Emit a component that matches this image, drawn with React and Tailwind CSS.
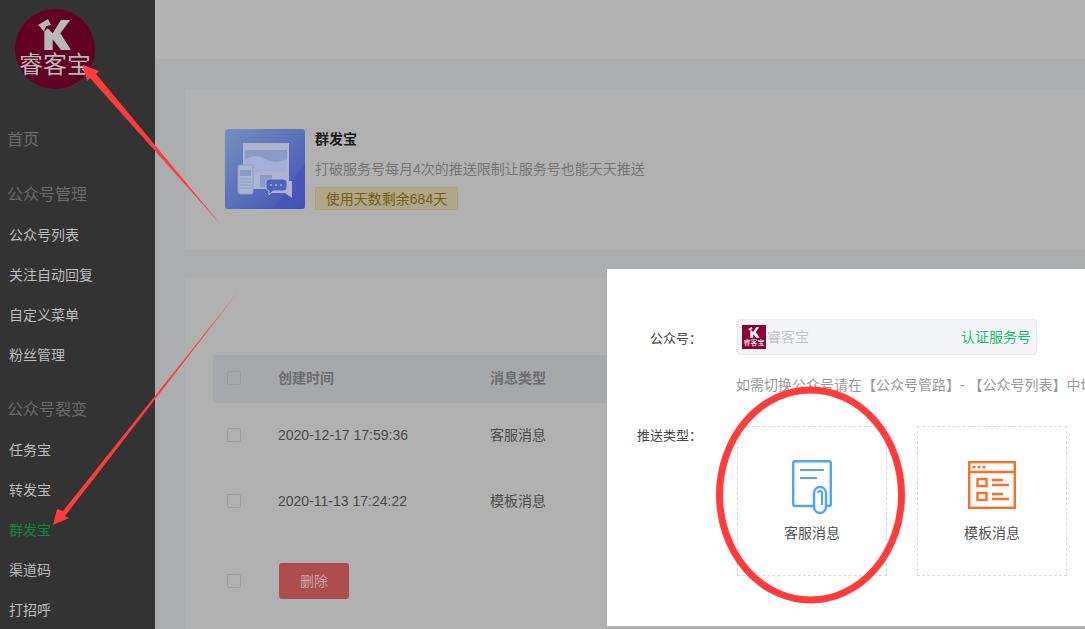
const FONT = 'font-["Liberation_Sans","Noto_Sans_CJK_SC",sans-serif]';

function NavGroup({ title, items }) {
  return (
    <div className="mb-[15px]">
      <div className="h-[40px] pl-[7px] text-base leading-[40px] text-[#6b6b6b]">{title}</div>
      {items.map((item) => (
        <div
          key={item}
          className={`h-[40px] pl-[9px] text-sm leading-[40px] ${item === '群发宝' ? 'text-[#0b8a3c]' : 'text-[#bcbcbc]'}`}
        >
          {item}
        </div>
      ))}
    </div>
  );
}

function KMark({ className }) {
  return (
    <svg viewBox="0 0 34 32" className={className}>
      <path d="M0 6 L10 0 L13 6 L8 7 L6 12.700 L2 7.700 Z" fill="currentColor" />
      <path d="M6.300 12.700 L9.700 9.300 L14.700 14.300 L23 1 L32.300 1 L22.300 14.300 L33 31 L23 31 L14.700 20.300 L14.700 31 L6.300 31 Z" fill="currentColor" />
    </svg>
  );
}

function Sidebar() {
  return (
    <aside className="w-[155px] shrink-0 bg-[#333333]">
      <div className="ml-[15px] mt-[9px] flex h-[80px] w-[80px] flex-col items-center overflow-hidden rounded-full bg-[#610023] text-[#b8b8b8]">
        <KMark className="mt-[10px] h-[32px] w-[34px] shrink-0" />
        <span className="whitespace-nowrap text-[24px] leading-[28px]">睿客宝</span>
      </div>
      <div className="mt-[36px] h-[30px] pl-[7px] text-base leading-[30px] text-[#6b6b6b]">首页</div>
      <div className="mt-[20px]">
        <NavGroup title="公众号管理" items={['公众号列表', '关注自动回复', '自定义菜单', '粉丝管理']} />
        <NavGroup title="公众号裂变" items={['任务宝', '转发宝', '群发宝', '渠道码', '打招呼']} />
      </div>
    </aside>
  );
}

function Illustration() {
  return (
    <svg viewBox="0 0 80 80" className="h-[80px] w-[80px] shrink-0 rounded-[3px]">
      <defs>
        <linearGradient id="ill" x1="0" y1="0" x2="1" y2="1">
          <stop offset="0" stopColor="#7391bf" />
          <stop offset="1" stopColor="#4250b5" />
        </linearGradient>
      </defs>
      <rect width="80" height="80" fill="url(#ill)" />
      <path d="M80 34 L48 80 L80 80 Z" fill="#4654b8" opacity=".6" />
      <rect x="18" y="14" width="46" height="46" fill="#adb4cd" />
      <rect x="20" y="21" width="42" height="22" fill="#8a9bc9" />
      <path d="M20 30 Q30 24 40 30 T62 30 V43 H20 Z" fill="#a3afd4" />
      <rect x="35" y="46" width="12" height="12" fill="#8a9bc9" />
      <rect x="13" y="36" width="15" height="29" rx="2" fill="#adb4cd" stroke="#8b9ccb" />
      <rect x="15" y="41" width="11" height="6" fill="#8a9bc9" />
      <path d="M15 50 H26 M15 53 H26 M15 56 H26 M15 59 H26" stroke="#8b9ccb" />
      <path d="M62 52 H67 V69 L60 64 H47 V60 H62 Z" fill="#adb4cd" />
      <path d="M44 50 H58 Q62 50 62 53 V59 Q62 62 58 62 H48 L44 66 V62 Q41 61 41 59 V53 Q41 50 44 50 Z" fill="#4f63bd" stroke="#adb4cd" />
      <circle cx="46" cy="56" r="1" fill="#adb4cd" />
      <circle cx="51" cy="56" r="1" fill="#adb4cd" />
      <circle cx="56" cy="56" r="1" fill="#adb4cd" />
    </svg>
  );
}

function Check() {
  return <span className="h-[14px] w-[14px] shrink-0 rounded-[2px] border border-[#9b9ca0]" />;
}

function Row({ time, type }) {
  return (
    <div className="flex h-[66px] items-center pb-[2px] pl-[14px] text-sm text-[#4a4a4c]">
      <Check />
      <span className="ml-[37px] w-[212px]">{time}</span>
      <span>{type}</span>
    </div>
  );
}

function Main() {
  return (
    <main className="min-w-0 flex-1 bg-[#acadaf]">
      <div className="h-[59px] bg-[#b3b3b3]" />
      <div className="pl-[30px] pt-[30px]">
        <section className="flex h-[160px] items-start bg-[#b1b1b1] pl-[40px] pt-[40px]">
          <Illustration />
          <div className="ml-[10px]">
            <div className="mt-[1px] text-sm font-bold leading-[18px] text-[#1c1c1c]">群发宝</div>
            <div className="mt-[11px] text-sm leading-[20px] text-[#757575]">打破服务号每月4次的推送限制让服务号也能天天推送</div>
            <div className="mt-[8px] flex h-[23px] w-[143px] items-center justify-center border border-[#a9a27e] bg-[#aea88a] text-sm text-[#7a5a10]">使用天数剩余684天</div>
          </div>
        </section>
        <section className="mt-[28px] h-[352px] bg-[#b1b1b1] pl-[28px] pt-[78px]">
          <div className="flex h-[48px] items-center bg-[#a7a8ac] pb-[2px] pl-[14px] text-sm font-bold text-[#6d6d70]">
            <Check />
            <span className="ml-[37px] w-[212px]">创建时间</span>
            <span>消息类型</span>
          </div>
          <Row time="2020-12-17 17:59:36" type="客服消息" />
          <Row time="2020-11-13 17:24:22" type="模板消息" />
          <div className="mt-[28px] flex items-center pl-[14px]">
            <Check />
            <button type="button" className="ml-[38px] h-[36px] w-[70px] rounded-[3px] bg-[#ad4d4f] text-sm text-[#c9a6a6]">删除</button>
          </div>
        </section>
      </div>
    </main>
  );
}

function ServiceIcon() {
  return (
    <svg viewBox="0 0 40 54" className="h-[54px] w-[40px] self-start" fill="none" stroke="#4da3ff" strokeWidth="2.400">
      <path d="M22 46 H3 Q1.200 46 1.200 44 V3 Q1.200 1.200 3 1.200 H37 Q38.800 1.200 38.800 3 V44 Q38.800 46 37 46 H34" />
      <path d="M8 10 H32 M8 18 H25" strokeWidth="2" />
      <rect x="22" y="27" width="12" height="26" rx="6" fill="#fff" />
      <path d="M26 33 Q26 31 28 31 Q30 31 30 33 V45" strokeWidth="2" />
    </svg>
  );
}

function TemplateIcon() {
  return (
    <svg viewBox="0 0 48 48" className="mt-[1px] h-[48px] w-[48px] self-start" fill="none" stroke="#fa6e2b" strokeWidth="2.400">
      <rect x="1.200" y="1.200" width="45.600" height="45.600" />
      <path d="M1 11 H47" />
      <circle cx="6" cy="6" r="1.600" fill="#fa6e2b" stroke="none" />
      <circle cx="11" cy="6" r="1.600" fill="#fa6e2b" stroke="none" />
      <circle cx="16" cy="6" r="1.600" fill="#fa6e2b" stroke="none" />
      <rect x="9.500" y="18" width="9" height="7" />
      <rect x="9.500" y="32" width="9" height="7" />
      <path d="M24 19 H35 M24 24 H41 M24 33 H35 M24 38 H41" />
    </svg>
  );
}

function TypeCard({ label, children }) {
  return (
    <div className="flex h-[150px] w-[150px] shrink-0 flex-col items-center border border-dashed border-[#d8d8d8] pt-[33px]">
      <div className="flex h-[56px]">{children}</div>
      <span className="mt-[7px] text-sm leading-[20px] text-[#515151]">{label}</span>
    </div>
  );
}

function Modal() {
  return (
    <div className="absolute left-[607px] top-[269px] h-[357px] w-[478px] overflow-hidden bg-white">
      <div className="mt-[50px] flex items-center">
        <span className="w-[130px] pl-[43px] pt-[3px] text-[13px] text-[#444444]">公众号：</span>
        <div className="flex h-[36px] w-[300px] items-center rounded-[4px] border border-[#e4e7ed] bg-[#f4f5f9] pl-[4px] pr-[5px]">
          <div className="flex h-[24px] w-[24px] shrink-0 flex-col items-center overflow-hidden bg-[#8a0030] text-white">
            <KMark className="mt-[2px] h-[11px] w-[12px] shrink-0" />
            <span className="whitespace-nowrap text-[7px] leading-[9px]">睿客宝</span>
          </div>
          <span className="ml-[1px] text-sm text-[#c4c6cc]">睿客宝</span>
          <span className="ml-auto text-sm text-[#19be6b]">认证服务号</span>
        </div>
      </div>
      <div className="ml-[129px] mt-[20px] whitespace-nowrap text-sm leading-[20px] text-[#999999] [text-spacing-trim:space-all]">
        如需切换公众号请在【公众号管路】- 【公众号列表】中切换
      </div>
      <div className="mt-[31px] flex items-start">
        <span className="w-[130px] shrink-0 pl-[30px] pt-[1px] text-[13px] leading-[18px] text-[#444444]">推送类型：</span>
        <div className="flex gap-[30px]">
          <TypeCard label="客服消息"><ServiceIcon /></TypeCard>
          <TypeCard label="模板消息"><TemplateIcon /></TypeCard>
        </div>
      </div>
    </div>
  );
}

function Annotations() {
  return (
    <svg viewBox="0 0 1085 629" className="pointer-events-none absolute left-0 top-0 h-[629px] w-[1085px]">
      <path d="M83 65 L99 71 L96 74 L222 226 L90 78 L87 81 Z" fill="#ff3b3b" />
      <path d="M53 525 L57 509 L63 511 L238 292 L65 516 L69 518 Z" fill="#ff3b3b" />
      <ellipse cx="810.500" cy="495" rx="91" ry="105" fill="none" stroke="#ff3b3b" strokeWidth="7" />
    </svg>
  );
}

export default function App() {
  return (
    <div className={`relative flex h-[629px] w-[1085px] overflow-hidden ${FONT}`}>
      <Sidebar />
      <Main />
      <Modal />
      <Annotations />
    </div>
  );
}
